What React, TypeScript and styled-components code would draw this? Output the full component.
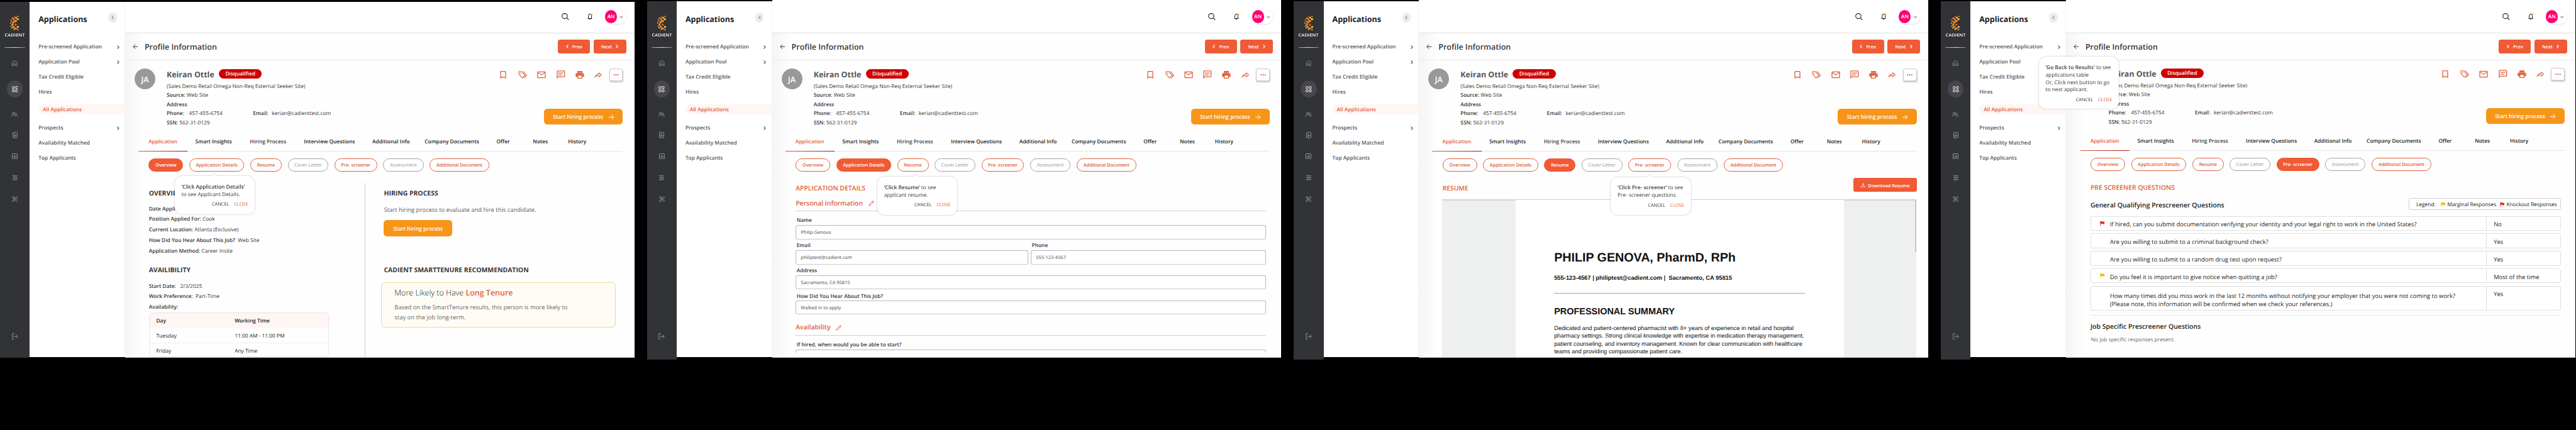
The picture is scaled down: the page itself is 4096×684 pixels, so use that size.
import React from "react";
import styled, { createGlobalStyle, css } from "styled-components";

const ORANGE = "#e0603c";
const ACTION = "#f05a35";
const INK = "#36373b";

const GlobalStyle = createGlobalStyle`
  html, body { margin: 0; background: #000; }
  body {
    font-family: "Open Sans", "Liberation Sans", sans-serif;
    font-size: 8.37px;
    color: ${INK};
    text-rendering: geometricPrecision;
  }
  *, *::before, *::after { box-sizing: border-box; }
  svg { display: block; flex: none; }
`;

/* ---------- shell ---------- */

const Board = styled.div`
  display: flex;
  align-items: flex-start;
  gap: 20.2px;
  width: 4096px;
  height: 684px;
  overflow: hidden;
  background: #000;
`;

const Screen = styled.section`
  position: relative;
  display: flex;
  align-items: flex-start;
  flex: none;
  width: 1008.5px;
`;

const Rail = styled.nav<{ $top: number; $end: number }>`
  display: flex;
  flex-direction: column;
  align-items: center;
  flex: none;
  width: 47.2px;
  margin-top: ${(p) => p.$top}px;
  height: ${(p) => p.$end - p.$top}px;
  padding-top: ${(p) => 24.6 - p.$top}px;
  background: #323337;
  color: #a3a4a8;
`;

const Brand = styled.div`
  margin-top: 4px;
  height: 8.6px;
  line-height: 8.6px;
  font-size: 6.4px;
  font-weight: 600;
  color: #fff;
  transform: scaleX(1.18);
`;

const RailRule = styled.div`
  width: 32.6px;
  height: 1px;
  margin: 14.6px 0 13.8px;
  background: linear-gradient(90deg, rgba(255, 255, 255, 0.45), #d5d6d8 50%, rgba(255, 255, 255, 0.35));
`;

const RailItem = styled.div<{ $h: number; $gap?: number }>`
  display: flex;
  align-items: center;
  justify-content: center;
  width: 25.2px;
  height: ${(p) => p.$h}px;
  margin-top: ${(p) => p.$gap ?? 0}px;
`;

const RailActive = styled(RailItem)`
  border-radius: 50%;
  background: #46474c;
  color: #fff;
`;

const Menu = styled.aside<{ $top: number }>`
  flex: none;
  width: 151.8px;
  margin-top: ${(p) => p.$top}px;
  height: ${(p) => 568.2 - p.$top}px;
  padding-left: 14px;
  background: #fff;
  border-right: 1px solid #f3f3f3;
`;

const MenuHead = styled.div<{ $top: number }>`
  display: flex;
  justify-content: space-between;
  align-items: flex-end;
  height: ${(p) => 39 - p.$top}px;
  padding-right: 12.4px;
  font-size: 12.49px;
  line-height: 17px;
  font-weight: 700;
  color: #1a1b1f;
`;

const Collapse = styled.div`
  display: flex;
  align-items: center;
  justify-content: center;
  width: 13.4px;
  height: 15.4px;
  margin-bottom: 3.4px;
  border-radius: 50%;
  background: #ececec;
  color: #8b8b8b;
`;

const MenuRow = styled.div<{ $h: number }>`
  display: flex;
  align-items: flex-end;
  justify-content: space-between;
  height: ${(p) => p.$h}px;
  padding-right: 8.2px;
  line-height: 9.2px;
  font-weight: 600;
  color: #55565a;
  svg { margin-bottom: 1.4px; }
`;

const MenuActive = styled.div`
  height: 16.6px;
  margin: 14.1px -1px 0 0;
  padding-left: 6.9px;
  line-height: 18.6px;
  font-weight: 600;
  color: ${ORANGE};
  background: #fff5f3;
  border-radius: 8px 0 0 8px;
`;

const Main = styled.main<{ $top: number }>`
  flex: 1;
  min-width: 0;
  margin-top: ${(p) => p.$top}px;
  height: ${(p) => 569 - p.$top}px;
  overflow: hidden;
  background: #fefefe;
  border-bottom: 1px solid #d8d8d8;
`;

const TopBar = styled.header<{ $top: number }>`
  display: flex;
  justify-content: flex-end;
  align-items: flex-end;
  height: ${(p) => 53 - p.$top}px;
  padding: 0 13px 14px 0;
  background: #fff;
  border-bottom: 1px solid #dfdfdf;
`;

const TopTools = styled.div`
  display: flex;
  align-items: center;
  height: 23px;
`;

const BellIcon = styled.svg`
  margin-left: 29px;
`;

const UserPill = styled.div`
  display: flex;
  align-items: center;
  gap: 4.2px;
  width: 35px;
  height: 23px;
  margin-left: 18px;
  padding-left: 1.6px;
  border-radius: 11.5px;
  background: #fff;
  color: #8a8a8a;
  box-shadow: 0 0.5px 2px rgba(0, 0, 0, 0.18);
`;

const UserMark = styled.div`
  width: 19px;
  height: 20.4px;
  border-radius: 50%;
  background: #ff006e;
  color: #fff;
  font-size: 8.24px;
  font-weight: 600;
  line-height: 22px;
  text-align: center;
`;

const Shade = styled.div`
  height: 520px;
  background: linear-gradient(90deg, #f5f5f5 0, #fefefe 30px);
`;

const TitleBar = styled.div`
  display: flex;
  align-items: center;
  height: 43px;
  padding: 0 12.9px 0 12px;
  border-bottom: 1px solid #e9e9e9;
`;

const Title = styled.h1`
  flex: 1;
  margin: 0 0 0 10.5px;
  padding-top: 1.6px;
  font-size: 12.49px;
  font-weight: 600;
  line-height: 18px;
  color: #36373b;
`;

const NavButton = styled.button<{ $w: number }>`
  display: flex;
  align-items: center;
  justify-content: center;
  gap: 6.4px;
  width: ${(p) => p.$w}px;
  height: 22px;
  margin-left: 5.6px;
  padding: 0.6px 0 0;
  border: 0;
  border-radius: 3.6px;
  background: ${ACTION};
  color: #fff;
  font: 600 7.28px "Open Sans", sans-serif;
`;

const Body = styled.div<{ $shift?: boolean }>`
  height: 473px;
  ${(p) => p.$shift && css`margin: -1px -1.8px 0 1.8px;`}
`;

/* ---------- profile ---------- */

const Profile = styled.div`
  display: flex;
  height: 113.6px;
  padding: 13px 18.1px 0 14.9px;
`;

const Avatar = styled.div`
  width: 33.2px;
  height: 33.2px;
  border-radius: 50%;
  background: #999;
  color: #fff;
  font-size: 12.6px;
  font-weight: 600;
  line-height: 36.6px;
  text-align: center;
`;

const Info = styled.div`
  flex: 1;
  margin-left: 17.9px;
`;

const NameRow = styled.div`
  display: flex;
  align-items: center;
  height: 17px;
  font-size: 12.44px;
  font-weight: 700;
  color: #55565a;
`;

const Name = styled.span`
  width: 83px;
  padding-top: 2px;
  line-height: 18px;
`;

const Badge = styled.span`
  width: 68.3px;
  height: 15.9px;
  border-radius: 7.5px;
  background: #cf0000;
  color: #fff;
  font-size: 8.27px;
  font-weight: 600;
  line-height: 16.8px;
  text-align: center;
`;

const Line = styled.div<{ $h: number; $s?: number; $w?: number; $c?: string; $l?: number }>`
  display: flex;
  align-items: flex-end;
  height: ${(p) => p.$h}px;
  padding-left: ${(p) => p.$l ?? 0}px;
  font-size: ${(p) => p.$s ?? 8.37}px;
  font-weight: ${(p) => p.$w ?? 400};
  line-height: calc(1.362em - 2.2px);
  color: ${(p) => p.$c ?? INK};
  white-space: pre;
  b { font-weight: 600; }
`;

const Col = styled.span<{ $w: number }>`
  flex: none;
  width: ${(p) => p.$w}px;
`;

const Actions = styled.div`
  display: flex;
  flex-direction: column;
  align-items: flex-end;
  justify-content: space-between;
  height: 89.4px;
  color: ${ORANGE};
`;

const IconRow = styled.div`
  display: flex;
  align-items: center;
  gap: 14.4px;
  height: 20px;
`;

const MoreButton = styled.div`
  display: flex;
  align-items: center;
  justify-content: center;
  width: 21.8px;
  height: 20px;
  margin-left: -4px;
  border: 0.6px solid #c9c9c9;
  border-radius: 3px;
  background: #fff;
  box-shadow: 0.6px 2px 2px rgba(0, 0, 0, 0.2);
`;

const HireButton = styled.button<{ $w: number; $s: number }>`
  display: flex;
  align-items: center;
  justify-content: center;
  gap: 8.6px;
  width: ${(p) => p.$w}px;
  height: 25.8px;
  padding: 0.8px 0 0;
  border: 0;
  border-radius: 5.5px;
  background: #f79518;
  color: #fff;
  font: 600 ${(p) => p.$s}px "Open Sans", sans-serif;
`;

const Tabs = styled.div`
  display: flex;
  height: 31.4px;
  margin: 0 18.1px 0 20.9px;
  border-bottom: 1px solid #e4e4e4;
`;

const Tab = styled.div<{ $w: number; $on?: boolean; $dim?: boolean }>`
  flex: none;
  width: ${(p) => p.$w}px;
  height: 31.4px;
  padding-top: 10.8px;
  line-height: 12px;
  font-weight: 600;
  white-space: nowrap;
  color: ${(p) => (p.$on ? ORANGE : p.$dim ? "#3a3b3f" : "#1c1d20")};
  ${(p) =>
    p.$on &&
    css`
      margin-right: 12.4px;
      padding-left: 16.3px;
      border-bottom: 1.4px solid;
      border-image: linear-gradient(90deg, #e0603c, #8f1d22) 1;
    `}
`;

const Pills = styled.div`
  display: flex;
  gap: 9.6px;
  padding: 11px 0 0 37.4px;
`;

const Pill = styled.div<{ $w: number; $tone: "on" | "off" | "mute"; $ls?: number }>`
  width: ${(p) => p.$w}px;
  height: 20.7px;
  border: 0.7px solid;
  border-radius: 10.3px;
  font-size: 7.34px;
  font-weight: 600;
  line-height: 20.6px;
  letter-spacing: ${(p) => p.$ls ?? 0}px;
  text-align: center;
  white-space: nowrap;
  border-color: ${(p) => (p.$tone === "mute" ? "#a3a3a3" : ORANGE)};
  color: ${(p) => (p.$tone === "on" ? "#fff" : p.$tone === "mute" ? "#9a9a9a" : ORANGE)};
  ${(p) => p.$tone === "on" && css`background: ${ACTION}; border-color: ${ACTION};`}
  ${(p) => p.$tone === "mute" && css`font-weight: 400; font-size: 7.66px;`}
`;

/* ---------- coach mark ---------- */

const Coach = styled.div<{ $x: number; $y: number; $h: number; $tip: number }>`
  position: absolute;
  left: ${(p) => p.$x}px;
  top: ${(p) => p.$y}px;
  width: 127.4px;
  height: ${(p) => p.$h}px;
  padding: 11.9px 10.8px 0;
  border-radius: 12px;
  background: #fff;
  filter: drop-shadow(0 0.4px 0.9px rgba(0, 0, 0, 0.28));
  line-height: 11.65px;
  white-space: nowrap;
  b { font-weight: 600; font-size: 8.41px; }
  &::before {
    content: "";
    position: absolute;
    left: ${(p) => p.$tip - 4}px;
    top: -4.6px;
    border: solid transparent;
    border-width: 0 4px 5px;
    border-bottom-color: #fff;
  }
`;

const CoachActions = styled.div`
  display: flex;
  justify-content: flex-end;
  gap: 7.8px;
  margin-top: 4.9px;
  font-size: 7.36px;
  color: #2b2c30;
  em { font-style: normal; color: ${ORANGE}; }
`;

/* ---------- overview ---------- */

const Overview = styled.div`
  display: flex;
  height: 300px;
  padding-left: 37.7px;
`;

const OverviewLeft = styled.div`
  width: 343.8px;
`;

const OverviewRight = styled.div`
  flex: 1;
  margin-top: 18px;
  padding-left: 29px;
  border-left: 0.6px solid #d2d2d2;
`;

const HireGap = styled.div`
  padding-top: 10.6px;
`;

const Tenure = styled.div`
  width: 372.9px;
  height: 72.2px;
  margin: 12.4px 0 0 -4.3px;
  padding-left: 20.2px;
  border: 0.7px solid #f3d98a;
  border-radius: 6px;
  background: #fffcf5;
  strong { font-weight: 600; color: ${ORANGE}; }
`;

const Schedule = styled.div`
  width: 286.7px;
  height: 71px;
  margin-top: 4.6px;
  border: 0.8px solid #e6e6e6;
  border-radius: 6px;
  overflow: hidden;
  color: #1c1d20;
`;

const ScheduleRow = styled.div<{ $head?: boolean }>`
  display: flex;
  align-items: center;
  height: ${(p) => (p.$head ? 23.6 : 23.8)}px;
  padding: 1.6px 0 0 10.8px;
  font-weight: ${(p) => (p.$head ? 600 : 400)};
  background: ${(p) => (p.$head ? "#fff5f3" : "#fefefe")};
  & + & { border-bottom: 1px solid #ececec; }
  &:last-child { border-bottom: 0; }
`;

/* ---------- application details ---------- */

const Details = styled.div`
  height: 288px;
  margin: 0 24px 0 37.5px;
  overflow: hidden;
`;

const SectionHead = styled.div<{ $h: number }>`
  display: flex;
  align-items: flex-end;
  height: ${(p) => p.$h}px;
  padding-bottom: 4.4px;
  gap: 8.6px;
  font-size: 10.44px;
  font-weight: 600;
  line-height: 14.2px;
  color: ${ORANGE};
  border-bottom: 1px solid #cfcfcf;
  svg { margin-bottom: 3px; }
`;

const FieldPair = styled.div`
  display: flex;
  gap: 3.9px;
`;

const Field = styled.div<{ $w?: number }>`
  flex: ${(p) => (p.$w ? "none" : 1)};
  width: ${(p) => (p.$w ? p.$w + "px" : "auto")};
`;

const Label = styled(Line)`
  padding-left: 1.5px;
  font-weight: 600;
`;

const Input = styled.div<{ $gap: number }>`
  height: 22.7px;
  margin-top: ${(p) => p.$gap}px;
  padding-left: 7.2px;
  border: 0.8px solid #b9b9b9;
  border-bottom-color: #c9c9c9;
  border-radius: 3px;
  background: #fff;
  font-size: 7.46px;
  line-height: 22.4px;
  color: #4a4b4f;
`;

/* ---------- resume ---------- */

const ResumeHead = styled.div`
  display: flex;
  justify-content: space-between;
  height: 44.2px;
  padding: 10.8px 17.4px 0 37.4px;
`;

const Download = styled.button`
  display: flex;
  align-items: center;
  justify-content: center;
  gap: 4.2px;
  width: 101.2px;
  height: 22px;
  padding: 0.6px 0 0;
  border: 0;
  border-radius: 3px;
  background: ${ACTION};
  color: #fff;
  font: 600 7.39px "Open Sans", sans-serif;
`;

const Viewer = styled.div`
  display: flex;
  width: 753.8px;
  height: 252px;
  margin-left: 37.1px;
  background: #eeefef;
  border-top: 1px solid #cfcfcf;
  box-shadow: inset 0 2px 2px -1px rgba(0, 0, 0, 0.12);
`;

const Sheet = styled.article`
  width: 521.8px;
  margin-left: 116.3px;
  padding: 0 61.2px 0 61.4px;
  background: #fff;
  font-family: "Liberation Sans", Arial, sans-serif;
`;

const SheetLine = styled(Line)`
  line-height: normal;
  color: #111;
`;

const SheetRule = styled.hr`
  height: 1.3px;
  margin: 18.8px 0 0;
  border: 0;
  background: #a2a2a2;
`;

const ScrollBar = styled.div`
  width: 2.6px;
  height: 83px;
  margin-left: auto;
  background: #c6c6c6;
`;

/* ---------- pre-screener ---------- */

const Screener = styled.div`
  margin-left: 37.1px;
  width: 748px;
`;

const ScreenerHead = styled.div`
  display: flex;
  justify-content: space-between;
  height: 29px;
  padding-top: 9.8px;
  margin-bottom: 9.2px;
`;

const Legend = styled.div`
  display: flex;
  align-items: center;
  width: 242px;
  height: 19.2px;
  padding: 1px 0 0 11px;
  border: 0.8px solid #cfcfcf;
  border-radius: 3px;
  background: #fff;
  font-size: 8.32px;
  color: #1c1d20;
  svg { margin: 0 3.6px 0 8px; }
  span + svg { margin-left: 5.4px; }
`;

const Question = styled.div<{ $h: number }>`
  display: flex;
  width: 747.6px;
  height: ${(p) => p.$h}px;
  margin-bottom: 4.4px;
  border: 0.8px solid #e0e0e0;
  border-radius: 3px;
  background: #fff;
  font-size: 9.45px;
  line-height: 13.2px;
  color: #1c1d20;
`;

const FlagSlot = styled.div`
  width: 30px;
  padding: 7.4px 0 0 14.2px;
`;

const Ask = styled.div<{ $pad: number }>`
  width: 599px;
  padding-top: ${(p) => p.$pad}px;
  white-space: pre-line;
  border-right: 0.8px solid #e0e0e0;
`;

const Answer = styled.div`
  padding: 5.6px 0 0 11.2px;
`;

const ScreenerRule = styled.div`
  height: 1px;
  margin-top: 6.8px;
  background: #e9e9e9;
`;

/* ---------- icons ---------- */

const Stroke = ({ w, h, box, d, sw = 1.6 }: { w: number; h: number; box: string; d: string; sw?: number }) => (
  <svg width={w} height={h} viewBox={box} fill="none" stroke="currentColor" strokeWidth={sw} preserveAspectRatio="none">
    <path d={d} />
  </svg>
);

const Solid = ({ size, d }: { size: number; d: string }) => (
  <svg width={size} height={size} viewBox="0 0 24 24" fill="currentColor" fillRule="evenodd">
    <path d={d} />
  </svg>
);

const Chevron = ({ dir, w = 4, h = 6, sw = 1.1 }: { dir: "l" | "r" | "d"; w?: number; h?: number; sw?: number }) => (
  <svg width={w} height={h} viewBox={`0 0 ${w} ${h}`} fill="none" stroke="currentColor" strokeWidth={sw}>
    <path
      d={
        dir === "l"
          ? `M${w - 0.6} .5L.8 ${h / 2}L${w - 0.6} ${h - 0.5}`
          : dir === "r"
            ? `M.6 .5L${w - 0.8} ${h / 2}L.6 ${h - 0.5}`
            : `M.4 .6L${w / 2} ${h - 0.7}L${w - 0.4} .6`
      }
    />
  </svg>
);

const LOGO: [number, number, number, number, string][] = [
  [163, 91, 9, 5, "#f6a11f"],
  [131, 95, 8, 5, "#e8552f"],
  [145, 103, 10, 8, "#f9b83a"],
  [163, 117, 10, 9, "#fbc04a"],
  [113, 108, 8, 6, "#f7c04a"],
  [126, 117, 8, 8, "#f6961f"],
  [143, 134, 11, 11, "#f6961f"],
  [108, 137, 8, 10, "#ee5a30"],
  [99, 124, 4, 7, "#f6a11f"],
  [95, 152, 4, 9, "#f8b040"],
  [124, 145, 10, 9, "#f6961f"],
  [113, 166, 9, 11, "#f6961f"],
  [142, 169, 10, 10, "#ee5a30"],
  [101, 182, 5, 8, "#f6a11f"],
  [124, 189, 8, 8, "#f6961f"],
  [163, 190, 10, 9, "#fbc04a"],
  [111, 198, 7, 7, "#f8a52a"],
  [145, 204, 10, 8, "#f6961f"],
  [130, 212, 8, 6, "#f8a52a"],
  [163, 216, 9, 5, "#f8b040"],
];

const Logo = () => (
  <svg width={14.4} height={23.5} viewBox="91 85 84 138">
    <path d="M124 115Q128 132 143 134Q128 138 113 166Q116 186 124 189Q132 202 145 204M145 103Q150 114 163 117" fill="none" stroke="#f6961f" strokeWidth="8" />
    {LOGO.map(([x, y, rx, ry, c]) => (
      <ellipse key={`${x}-${y}`} cx={x} cy={y} rx={rx} ry={ry} fill={c} />
    ))}
  </svg>
);

const Flag = ({ color }: { color: string }) => (
  <svg width={7.4} height={6.8} viewBox="0 0 7.4 6.8" fill={color}>
    <path d="M.4 0H4l.4 .8H7.2V4.6H4.3L3.9 3.8H1.5V6.8H.4z" />
  </svg>
);

const Pencil = () => (
  <svg width={9.2} height={8.8} viewBox="0 0 9.2 8.8" fill="none" stroke="currentColor" strokeWidth="0.9" strokeLinejoin="round">
    <path d="M.8 8.2L1.3 6.1L6.6 1Q7.3.4 8 1Q8.7 1.7 8 2.4L2.8 7.5zM5.8 1.8L7.2 3.2" />
  </svg>
);

const BOOKMARK = "M17 3H7c-1.1 0-1.99.9-1.99 2L5 21l7-3 7 3V5c0-1.1-.9-2-2-2zm0 15l-5-2.18L7 18V5h10v13z";
const MAIL = "M20 4H4c-1.1 0-1.99.9-1.99 2L2 18c0 1.1.9 2 2 2h16c1.1 0 2-.9 2-2V6c0-1.1-.9-2-2-2zm0 14H4V8l8 5 8-5v10zm-8-7L4 6h16l-8 5z";
const PRINT =
  "M19 8H5c-1.66 0-3 1.34-3 3v6h4v4h12v-4h4v-6c0-1.66-1.34-3-3-3zm-3 11H8v-5h8v5zm3-7c-.55 0-1-.45-1-1s.45-1 1-1 1 .45 1 1-.45 1-1 1zm-1-9H6v4h12V3z";
const CHAT = "M20 2H4c-1.1 0-2 .9-2 2v18l4-4h14c1.1 0 2-.9 2-2V4c0-1.1-.9-2-2-2zm0 14H5.2L4 17.2V4h16v12zM6 7h12v2H6zM6 11.4h9v2H6z";
const SHARE = "M14 4.5V8.6C7 9.6 3.4 14.4 2 20.4C5 16.6 8.6 15 14 15V19.2L22.4 11.8zM15.6 8.4L19.6 11.8L15.6 15.2V13.2C12 12.9 9.4 13.6 7 14.8C9 12 11.6 10.6 15.6 10.2z";

/* ---------- shared parts ---------- */

function RailNav({ top, end }: { top: number; end: number }) {
  return (
    <Rail $top={top} $end={end}>
      <Logo />
      <Brand>CADIENT</Brand>
      <RailRule />
      <RailItem $h={20} $gap={0.4}>
        <Stroke w={8.6} h={9.6} box="0 0 17 19" d="M1 6.8L8.5 1.3L16 6.8V18H11.3V11H5.7V18H1z" />
      </RailItem>
      <RailActive $h={26.6} $gap={18}>
        <svg width={9.8} height={9.8} viewBox="0 0 9.8 9.8" fill="none" stroke="currentColor" strokeWidth="1">
          {[0.6, 5.8].map((x) => [0.6, 5.8].map((y) => <rect key={`${x}${y}`} x={x} y={y} width="3.3" height="3.3" rx="1" />))}
        </svg>
      </RailActive>
      <RailItem $h={20} $gap={17.2}>
        <Stroke w={10.4} h={7.6} box="0 0 20 15" d="M1 14.5C1.500 10 4 8.300 7 8.300S12.500 10 13 14.500M7 1A3.600 3.600 0 1 0 7 8.200A3.600 3.600 0 1 0 7 1M12.500 3.200A2.900 2.900 0 0 1 13.500 8.800C16.500 9.300 18.500 11 19 14.500" />
      </RailItem>
      <RailItem $h={20} $gap={12.6}>
        <Stroke w={8} h={9.8} box="0 0 16 19" d="M1 2.500Q1 1 2.500 1H13.500Q15 1 15 2.500V16.500Q15 18 13.500 18H2.500Q1 18 1 16.500zM3.500 5.500H7.500M3.500 9.500H12.500M3.500 11.800H12.500M4.500 14.800H8" />
      </RailItem>
      <RailItem $h={20} $gap={13.4}>
        <Stroke w={9} h={9.3} box="0 0 18 18" d="M1 2.500Q1 1 2.500 1H15.500Q17 1 17 2.500V15.500Q17 17 15.500 17H2.500Q1 17 1 15.500zM5.300 8.500V14M9 4V14M12.700 7V14" />
      </RailItem>
      <RailItem $h={20} $gap={14.4}>
        <Stroke w={8} h={9.4} box="0 0 16 19" d="M0 3.500H2.500M7.500 3.500H16M5 1.300A2.200 2.200 0 1 0 5 5.700A2.200 2.200 0 1 0 5 1.300M0 9.500H8.500M13.500 9.500H16M11 7.300A2.200 2.200 0 1 0 11 11.700A2.200 2.200 0 1 0 11 7.300M0 15.500H2.500M7.500 15.500H16M5 13.300A2.200 2.200 0 1 0 5 17.700A2.200 2.200 0 1 0 5 13.300" />
      </RailItem>
      <RailItem $h={20} $gap={13.5}>
        <Stroke w={9.2} h={9} box="0 0 18 18" sw={1.5} d="M2.200 1.500Q4 .5 5.500 2L16.500 13.500Q17.500 16 15.500 17Q14 17.500 13 16.500L1.500 5Q.8 3 2.200 1.500M3 13L13.500 1.500Q15 .8 16.500 2Q17.300 3.500 16.200 4.800L5.500 16L1.500 17zM4 6L6 4.300M7 9L8.500 7.500" />
      </RailItem>
      <RailItem $h={20} $gap={198.8}>
        <Stroke w={9.8} h={10.4} box="0 0 19 20" d="M7.500 1H1.500V19H7.500M5 10H17.500M13 5L18 10L13 15" />
      </RailItem>
    </Rail>
  );
}

function SideMenu({ top }: { top: number }) {
  return (
    <Menu $top={top}>
      <MenuHead $top={top}>
        Applications
        <Collapse>
          <Chevron dir="l" />
        </Collapse>
      </MenuHead>
      <MenuRow $h={40.4}>Pre-screened Application<Chevron dir="r" /></MenuRow>
      <MenuRow $h={24.1}>Application Pool<Chevron dir="r" /></MenuRow>
      <MenuRow $h={24.1}>Tax Credit Eligible</MenuRow>
      <MenuRow $h={24.1}>Hires</MenuRow>
      <MenuActive>All Applications</MenuActive>
      <MenuRow $h={26}>Prospects<Chevron dir="r" /></MenuRow>
      <MenuRow $h={24.1}>Availability Matched</MenuRow>
      <MenuRow $h={24.1}>Top Applicants</MenuRow>
    </Menu>
  );
}

const TABS: [string, number][] = [
  ["Smart Insights", 86.8],
  ["Hiring Process", 85.9],
  ["Interview Questions", 108.7],
  ["Additional Info", 83.3],
  ["Company Documents", 114.3],
  ["Offer", 57.8],
  ["Notes", 55.8],
  ["History", 40],
];

const PILLS: [string, number, boolean?, number?][] = [
  ["Overview", 54.9],
  ["Application Details", 87.5],
  ["Resume", 50],
  ["Cover Letter", 64.7, true],
  ["Pre- screener", 67.9],
  ["Assessment", 64.3, true],
  ["Additional Document", 94.7, false, -0.12],
];

interface FrameProps {
  top?: number;
  mainTop?: number;
  end?: number;
  active: string;
  shift?: boolean;
  coach: React.ReactNode;
  children: React.ReactNode;
}

function Frame({ top = 1.5, mainTop = 0, end = 571.6, active, shift, coach, children }: FrameProps) {
  return (
    <Screen>
      <RailNav top={top} end={end} />
      <SideMenu top={top} />
      <Main $top={mainTop}>
        <TopBar $top={mainTop}>
          <TopTools>
            <svg width={12} height={11} viewBox="0 0 12 11" fill="none" stroke="#1c1d20" strokeWidth="1.1">
              <ellipse cx="4.9" cy="4.6" rx="4.3" ry="4" />
              <path d="M8 7.4L11.3 10.5" />
            </svg>
            <BellIcon width={9} height={11} viewBox="0 0 9 11" fill="none" stroke="#1c1d20" strokeWidth="1">
              <path d="M.4 8.4H7.6M1.5 8.2V4.6Q1.5 1.6 4 1.6Q6.5 1.6 6.5 4.6V8.2M3 9.1Q4 10.6 5 9.1M4 .6V1.6" />
              <circle cx="6.9" cy="2" r="1.6" fill="#f5a142" stroke="none" />
            </BellIcon>
            <UserPill>
              <UserMark>AN</UserMark>
              <Chevron dir="d" w={5.6} h={4} />
            </UserPill>
          </TopTools>
        </TopBar>
        <Shade>
          <TitleBar>
            <svg width={8.4} height={8.4} viewBox="0 0 8.4 8.4" fill="none" stroke="#36373b" strokeWidth="1">
              <path d="M8.4 4.2H.8M4.3 .6L.8 4.2L4.3 7.8" />
            </svg>
            <Title>Profile Information</Title>
            <NavButton $w={50.9}>
              <Chevron dir="l" />
              Prev
            </NavButton>
            <NavButton $w={51.9}>
              Next
              <Chevron dir="r" />
            </NavButton>
          </TitleBar>
          <Body $shift={shift}>
            <Profile>
              <Avatar>JA</Avatar>
              <Info>
                <NameRow>
                  <Name>Keiran Ottle</Name>
                  <Badge>Disqualified</Badge>
                </NameRow>
                <Line $h={16.4}>(Sales Demo Retail Omega Non-Req External Seeker Site)</Line>
                <Line $h={13.4}><b>Source:</b> Web Site</Line>
                <Line $h={15}><b>Address</b></Line>
                <Line $h={14.8}>
                  <Col $w={35.6}><b>Phone:</b></Col>
                  <Col $w={101.6}>457-455-6754</Col>
                  <Col $w={29.9}><b>Email:</b></Col>
                  kerian@cadienttest.com
                </Line>
                <Line $h={15}><b>SSN:</b> 562-31-0129</Line>
              </Info>
              <Actions>
                <IconRow>
                  <Solid size={16} d={BOOKMARK} />
                  <svg width={16} height={16} viewBox="0 0 16 16" fill="none" stroke="currentColor" strokeWidth="1.1" strokeLinejoin="round">
                    <path d="M2.1 2.8V6.8L7.6 13.1L12 8.9L6.6 2.8zM8.8 2.4L14.6 8.9L10.2 13.1" />
                    <circle cx="4.6" cy="5.3" r=".9" fill="currentColor" stroke="none" />
                  </svg>
                  <Solid size={16} d={MAIL} />
                  <Solid size={15.6} d={CHAT} />
                  <Solid size={16} d={PRINT} />
                  <Solid size={14.2} d={SHARE} />
                  <MoreButton>
                    <svg width={9} height={2.2} viewBox="0 0 9 2.2" fill="currentColor">
                      <circle cx="1.2" cy="1.1" r="1.05" />
                      <circle cx="4.5" cy="1.1" r="1.05" />
                      <circle cx="7.8" cy="1.1" r="1.05" />
                    </svg>
                  </MoreButton>
                </IconRow>
                <HireButton $w={125.4} $s={8.48}>
                  Start hiring process
                  <svg width={8.6} height={8.6} viewBox="0 0 8.6 8.6" fill="none" stroke="currentColor" strokeWidth="1">
                    <path d="M0 4.3H7.8M4.3 .5L8 4.3L4.3 8.1" />
                  </svg>
                </HireButton>
              </Actions>
            </Profile>
            <Tabs>
              <Tab $w={78.3} $on>Application</Tab>
              {TABS.map(([t, w]) => (
                <Tab key={t} $w={w} $dim={t === "Hiring Process"}>{t}</Tab>
              ))}
            </Tabs>
            <Pills>
              {PILLS.map(([t, w, mute, ls]) => (
                <Pill key={t} $w={w} $ls={ls} $tone={t === active ? "on" : mute ? "mute" : "off"}>{t}</Pill>
              ))}
            </Pills>
            {children}
          </Body>
        </Shade>
      </Main>
      {coach}
    </Screen>
  );
}

const CoachButtons = () => (
  <CoachActions>
    CANCEL<em>CLOSE</em>
  </CoachActions>
);

/* ---------- screens ---------- */

function OverviewScreen() {
  return (
    <Frame
      top={2.5}
      mainTop={2.5}
      end={569}
      active="Overview"
      coach={
        <Coach $x={277.9} $y={280.2} $h={60.4} $tip={62}>
          <b>‘Click Application Details’</b>
          <br />
          to see Applicant Details.
          <CoachButtons />
        </Coach>
      }
    >
      <Overview>
        <OverviewLeft>
          <Line $h={41.8} $s={10.43} $w={700}>OVERVIEW</Line>
          <Line $h={22.4}><b>Date Applied:</b> 12/24/2024 (11:00:12 PM)</Line>
          <Line $h={16.8}><b>Position Applied For:</b> Cook</Line>
          <Line $h={16.8}><b>Current Location:</b> Atlanta (Exclusive)</Line>
          <Line $h={16.8}><b>How Did You Hear About This Job?</b>  Web Site</Line>
          <Line $h={16.9}><b>Application Method:</b> Career Insite</Line>
          <Line $h={32.2} $s={10.43} $w={700}>AVAILIBILITY</Line>
          <Line $h={23.7}><b>Start Date:</b>   2/3/2025</Line>
          <Line $h={16.3}><b>Work Preference:</b>  Part-Time</Line>
          <Line $h={16.4}><b>Availability:</b></Line>
          <Schedule>
            <ScheduleRow $head><Col $w={124.7}>Day</Col>Working Time</ScheduleRow>
            <ScheduleRow><Col $w={124.7}>Tuesday</Col>11:00 AM - 11:00 PM</ScheduleRow>
            <ScheduleRow><Col $w={124.7}>Friday</Col>Any Time</ScheduleRow>
          </Schedule>
        </OverviewLeft>
        <OverviewRight>
          <Line $h={23.8} $s={10.43} $w={700}>HIRING PROCESS</Line>
          <Line $h={25} $s={9.43} $c="#5d5e62">Start hiring process to evaluate and hire this candidate.</Line>
          <HireGap>
            <HireButton $w={108.7} $s={8.38}>Start hiring process</HireButton>
          </HireGap>
          <Line $h={60.4} $s={10.43} $w={700}>CADIENT SMARTTENURE RECOMMENDATION</Line>
          <Tenure>
            <Line $h={24.4} $s={12.48} $w={300} $c="#1c1d20">More Likely to Have <strong>Long Tenure</strong></Line>
            <Line $h={21} $s={9.43} $c="#66676b">Based on the SmartTenure results, this person is more likely to</Line>
            <Line $h={15.2} $s={9.43} $c="#66676b">stay on the job long-term.</Line>
          </Tenure>
        </OverviewRight>
      </Overview>
    </Frame>
  );
}

function DetailsScreen() {
  return (
    <Frame
      active="Application Details"
      coach={
        <Coach $x={366.2} $y={281.2} $h={60.4} $tip={62}>
          <b>‘Click Resume’</b> to see
          <br />
          applicant resume.
          <CoachButtons />
        </Coach>
      }
    >
      <Details>
        <Line $h={33.8} $s={10.42} $w={600} $c={ORANGE}>APPLICATION DETAILS</Line>
        <SectionHead $h={29.8}>Personal information<Pencil /></SectionHead>
        <Label $h={19.4}>Name</Label>
        <Input $gap={2.4}>Philip Genova</Input>
        <FieldPair>
          <Field $w={370}>
            <Label $h={14.8}>Email</Label>
            <Input $gap={2.4}>philiptest@cadient.com</Input>
          </Field>
          <Field>
            <Label $h={14.8}>Phone</Label>
            <Input $gap={2.4}>555-123-4567</Input>
          </Field>
        </FieldPair>
        <Label $h={15}>Address</Label>
        <Input $gap={2.2}>Sacramento, CA 95815</Input>
        <Label $h={16.2}>How Did You Hear About This Job?</Label>
        <Input $gap={1}>Walked in to apply</Input>
        <SectionHead $h={33.6}>Availability<Pencil /></SectionHead>
        <Label $h={19.6}>If hired, when would you be able to start?</Label>
        <Input $gap={2} />
      </Details>
    </Frame>
  );
}

function ResumeScreen() {
  return (
    <Frame
      active="Resume"
      coach={
        <Coach $x={503.9} $y={281.6} $h={60.4} $tip={62}>
          <b>‘Click Pre- screener’</b> to see
          <br />
          Pre- screener questions.
          <CoachButtons />
        </Coach>
      }
    >
      <ResumeHead>
        <Line $h={23} $s={10.25} $w={600} $c={ORANGE}>RESUME</Line>
        <Download>
          <svg width={7} height={7.4} viewBox="0 0 7 7.4" fill="none" stroke="currentColor" strokeWidth=".9">
            <path d="M3.5 0V4.4M1.7 2.8L3.5 4.6L5.3 2.8M.5 4.9V6.9H6.5V4.9" />
          </svg>
          Download Resume
        </Download>
      </ResumeHead>
      <Viewer>
        <Sheet>
          <SheetLine $h={104.6} $s={19.67} $w={700}>PHILIP GENOVA, PharmD, RPh</SheetLine>
          <SheetLine $h={24.8} $s={9.38} $w={700}>555-123-4567 | philiptest@cadient.com |  Sacramento, CA 95815</SheetLine>
          <SheetRule />
          <SheetLine $h={36.4} $s={14.44} $w={700}>PROFESSIONAL SUMMARY</SheetLine>
          <SheetLine $h={23.2} $s={9.35}>Dedicated and patient-centered pharmacist with 8+ years of experience in retail and hospital</SheetLine>
          <SheetLine $h={12.4} $s={9.35}>pharmacy settings. Strong clinical knowledge with expertise in medication therapy management,</SheetLine>
          <SheetLine $h={12.4} $s={9.35}>patient counseling, and inventory management. Known for clear communication with healthcare</SheetLine>
          <SheetLine $h={12.4} $s={9.35}>teams and providing compassionate patient care.</SheetLine>
        </Sheet>
        <ScrollBar />
      </Viewer>
    </Frame>
  );
}

const QUESTIONS: [string, string, number, string?][] = [
  ["If hired, can you submit documentation verifying your identity and your legal right to work in the United States?", "No", 23.4, "#e02b2b"],
  ["Are you willing to submit to a criminal background check?", "Yes", 23.4],
  ["Are you willing to submit to a random drug test upon request?", "Yes", 23.4],
  ["Do you feel it is important to give notice when quitting a job?", "Most of the time", 23.4, "#f9b208"],
  ["How many times did you miss work in the last 12 months without notifying your employer that you were not coming to work?\n(Please note, this information will be confirmed when we check your references.)", "Yes", 39.2],
];

function ScreenerScreen() {
  return (
    <Frame
      active="Pre- screener"
      shift
      coach={
        <Coach $x={155.6} $y={90.3} $h={82.8} $tip={61.5}>
          <b>‘Go Back to Results’</b> to see
          <br />
          applications table
          <br />
          Or, Click next button to go
          <br />
          to next applicant.
          <CoachButtons />
        </Coach>
      }
    >
      <Screener>
        <Line $h={33.8} $s={10.42} $w={600} $c={ORANGE}>PRE SCREENER QUESTIONS</Line>
        <ScreenerHead>
          <Line $h={17.4} $s={10.52} $w={600} $c="#1c1d20">General Qualifying Prescreener Questions</Line>
          <Legend>
            Legend:
            <Flag color="#f9b208" />
            <span>Marginal Responses</span>
            <Flag color="#e02b2b" />
            <span>Knockout Responses</span>
          </Legend>
        </ScreenerHead>
        {QUESTIONS.map(([q, a, h, flag]) => (
          <Question key={q} $h={h}>
            <FlagSlot>{flag && <Flag color={flag} />}</FlagSlot>
            <Ask $pad={h > 30 ? 8 : 5.6}>{q}</Ask>
            <Answer>{a}</Answer>
          </Question>
        ))}
        <ScreenerRule />
        <Line $h={24.6} $s={10.5} $w={600} $c="#1c1d20">Job Specific Prescreener Questions</Line>
        <Line $h={19} $c="#66676b" $l={0.8}>No job specific responses present.</Line>
      </Screener>
    </Frame>
  );
}

export default function App() {
  return (
    <>
      <GlobalStyle />
      <Board>
        <OverviewScreen />
        <DetailsScreen />
        <ResumeScreen />
        <ScreenerScreen />
      </Board>
    </>
  );
}
